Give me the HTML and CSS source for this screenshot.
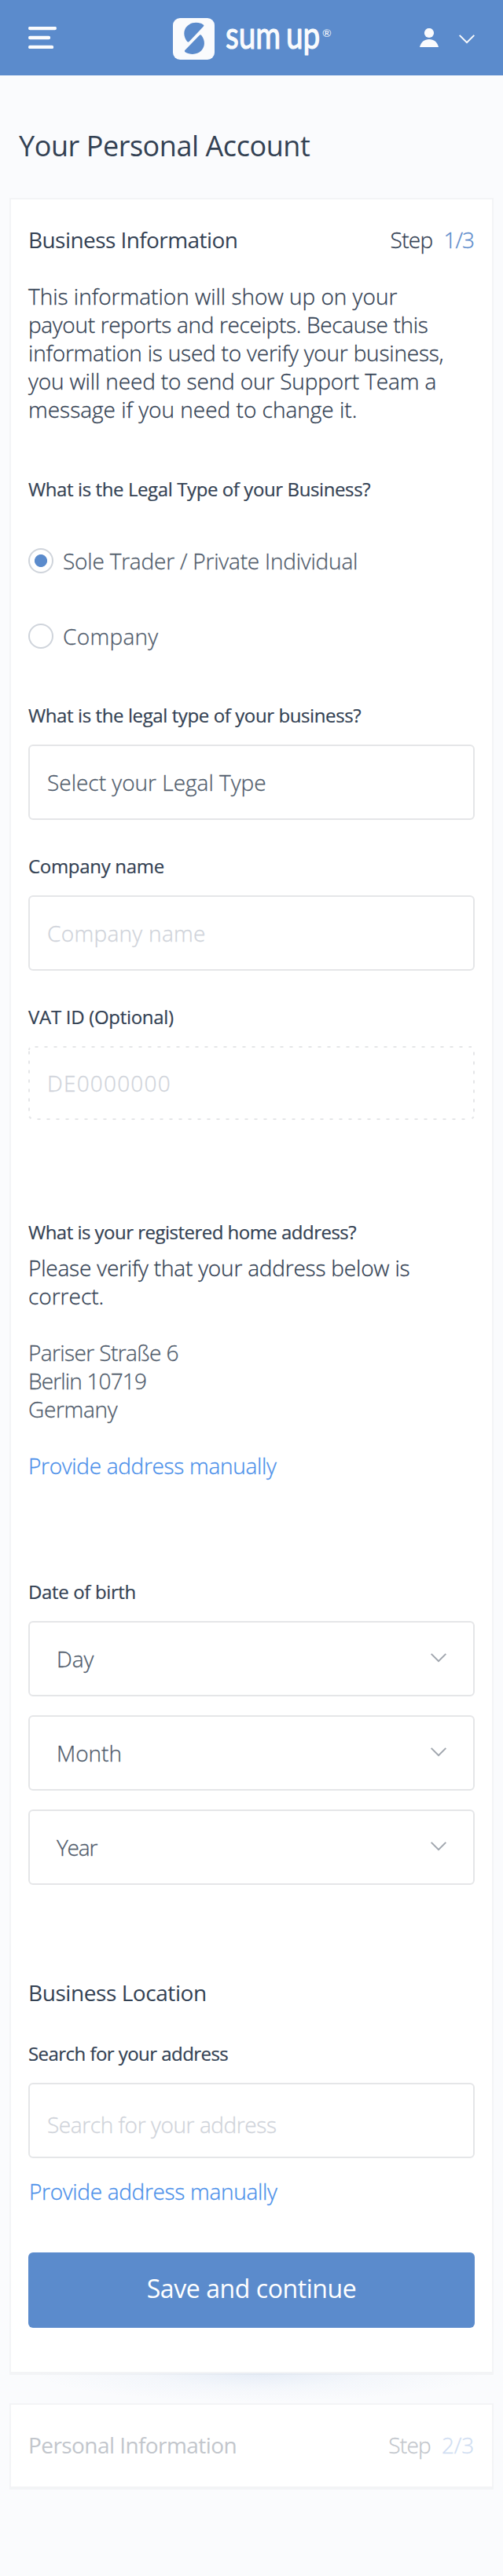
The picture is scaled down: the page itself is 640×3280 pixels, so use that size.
FILE: index.html
```html
<!DOCTYPE html>
<html lang="en">
<head>
<meta charset="utf-8">
<title>SumUp – Your Personal Account</title>
<link rel="stylesheet" href="styles.css">
</head>
<body>
<header class="topbar">
  <svg class="menu-icon" width="36" height="28" viewBox="0 0 36 28" fill="none" stroke="#fafbfd" stroke-width="4.4" stroke-linecap="round">
    <path d="M2.2 2H33.8M2.2 14H26M2.2 26H30"/>
  </svg>
  <svg class="logo" width="204" height="60" viewBox="0 0 204 60" fill="#fafbfd">
    <rect width="53" height="53" rx="9"/>
    <g fill="#5b8bcc">
      <path d="M38.7 8.4Q40 9.5 38.8 10.7L20.6 29.9Q19.2 31.2 18 29.8C14.3 24.500 13.300 19 15.300 14.500C18.500 6.500 29.500 2.800 38.700 8.400Z"/>
      <path d="M15.500 43.200Q14.300 42 15.500 40.800L33.700 21.900Q35.100 20.600 36.300 22C40.500 27.500 40.800 33.500 38.500 38C34.500 46 24 48.300 15.500 43.200Z"/>
    </g>
    <g class="wordmark">
      <text transform="translate(67 38.500) scale(.79 1)">sum</text>
      <text transform="translate(144 38.500) scale(.79 1)">up</text>
    </g>
    <text class="registered" x="190" y="24">®</text>
  </svg>
  <div class="account">
    <svg width="24" height="24" viewBox="0 0 24 24" fill="#fafbfd">
      <circle cx="12" cy="6" r="6.100"/>
      <path d="M0 24C1.500 17.500 6 14 12 14S22.500 17.500 24 24Z"/>
    </svg>
    <svg width="20" height="12" viewBox="0 0 20 12" fill="none" stroke="#fafbfd" stroke-width="2"><path d="M.7 .9L10 10.200L19.300 .9"/></svg>
  </div>
</header>

<main>
  <h1 class="page-title">Your Personal Account</h1>

  <section class="card card-active">
    <div class="card-head">
      <h2 class="heading">Business Information</h2>
      <div class="step"><span>Step</span><span class="count">1/3</span></div>
    </div>
    <p class="copy intro">
      <span>This information will show up on your</span>
      <span class="tight-3">payout reports and receipts. Because this</span>
      <span class="tight-2">information is used to verify your business,</span>
      <span class="tight-1">you will need to send our Support Team a</span>
      <span>message if you need to change it.</span>
    </p>

    <div class="label legal-label">What is the Legal Type of your Business?</div>
    <div class="radios">
      <div class="radio"><i class="dot dot-on"></i><span class="tight-2">Sole Trader / Private Individual</span></div>
      <div class="radio"><i class="dot"></i><span class="loose-3">Company</span></div>
    </div>

    <div class="label type-label">What is the legal type of your business?</div>
    <div class="field">Select your Legal Type</div>
    <div class="label label-wide">Company name</div>
    <div class="field placeholder loose-3">Company name</div>
    <div class="label label-wide">VAT ID (Optional)</div>
    <div class="field placeholder optional">
      <svg class="dashes" width="568" height="94" viewBox="0 0 568 94" fill="none" stroke="#e5e6e8" stroke-width="2" stroke-dasharray="4 8">
        <path d="M8.500 1H564"/><path d="M11.500 93H560"/><path d="M1 6.500V90"/><path d="M567 7.500V90"/>
        <path stroke-dasharray="none" d="M1 5Q1 3.200 2 2.200M1.200 89.800L3.500 92.300M566.800 90L564.500 92.300"/>
      </svg>
      <span class="digits">DE0000000</span>
    </div>

    <div class="label address-label">What is your registered home address?</div>
    <p class="copy verify">
      <span class="tight-2">Please verify that your address below is</span>
      <span>correct.</span>
    </p>
    <p class="copy address">
      <span class="tight-5">Pariser Straße 6</span>
      <span class="tight-8">Berlin 10719</span>
      <span class="tight-3">Germany</span>
    </p>
    <a class="link">Provide address manually</a>

    <div class="label birth-label">Date of birth</div>
    <div class="selects">
      <div class="field select"><span>Day</span><svg width="20" height="12" viewBox="0 0 20 12" class="chevron"><path d="M.7 .9L10 10.200L19.300 .9"/></svg></div>
      <div class="field select"><span>Month</span><svg width="20" height="12" viewBox="0 0 20 12" class="chevron"><path d="M.7 .9L10 10.200L19.300 .9"/></svg></div>
      <div class="field select"><span class="year">Year</span><svg width="20" height="12" viewBox="0 0 20 12" class="chevron"><path d="M.7 .9L10 10.200L19.300 .9"/></svg></div>
    </div>

    <h2 class="heading location-heading">Business Location</h2>
    <div class="label search-label">Search for your address</div>
    <div class="field placeholder search">Search for your address</div>
    <a class="link link-search">Provide address manually</a>
    <div class="button">Save and continue</div>
  </section>

  <section class="card card-next">
    <div class="card-head">
      <h2 class="heading">Personal Information</h2>
      <div class="step"><span>Step</span><span class="count">2/3</span></div>
    </div>
  </section>
</main>
</body>
</html>
```
FILE: styles.css
```css
* { box-sizing: border-box; }
html { background: #fafbfd; }
body {
  margin: 0;
  height: 3280px;
  color: #334153;
  font: 300 28px/36px "Open Sans", "Noto Sans", sans-serif;
  -webkit-text-stroke: .3px currentColor;
}
h1, h2, p { margin: 0; }
svg { display: block; flex: none; }

/* Top bar */
.topbar {
  display: grid;
  grid-template-columns: 184px 1fr auto;
  align-items: center;
  height: 96px;
  padding: 0 36px;
  background: #5b8bcc;
}
.logo { margin-top: 10px; overflow: visible; }
.wordmark {
  font: 400 49px "Lato", sans-serif;
  stroke: #fafbfd;
  stroke-width: 1.2;
  stroke-linejoin: round;
}
.registered { font: 400 14px "Lato", sans-serif; }
.account { display: flex; align-items: center; gap: 26px; }
.account svg:last-child { margin-top: 4px; }

.page-title {
  padding: 66px 24px 0;
  font-size: 36px;
  font-weight: 400;
  line-height: 48px;
  letter-spacing: -.45px;
  -webkit-text-stroke: 0;
}

/* Cards */
.card {
  position: relative;
  margin: 0 12px;
  padding: 33px 22px 0;
  border: 2px solid #f3f4f6;
  border-bottom-width: 4px;
  background: #fff;
}
.card-active { margin-top: 42px; padding-bottom: 56px; }
.card-active::after {
  content: "";
  position: absolute;
  left: 30px;
  right: 10px;
  top: calc(100% + 2px);
  height: 36px;
  background: radial-gradient(ellipse 50% 100% at 50% 0, rgba(91, 139, 204, .12), rgba(91, 139, 204, .04) 50%, rgba(91, 139, 204, 0));
}
.card-next { margin-top: 36px; padding-bottom: 35px; }
.card-next .heading, .card-next .step { color: #c2c6cc; }
.card-next .step .count { color: #cfddf2; }
.card-head { display: flex; justify-content: space-between; }
.heading { font-size: 28px; font-weight: 400; line-height: 36px; letter-spacing: -.57px; -webkit-text-stroke: 0; }
.step { display: flex; gap: 14px; padding-right: 1px; letter-spacing: -.7px; }
.count { color: #5b8bcc; letter-spacing: -1px; }
.card-next .count { letter-spacing: -.2px; }

.copy { white-space: nowrap; }
.copy span { display: block; }
.intro { margin-top: 36px; }

/* Form */
.label { font-size: 24px; font-weight: 400; line-height: 30px; letter-spacing: -.4px; -webkit-text-stroke: .2px currentColor; }
.label-wide { margin-top: 44px; letter-spacing: -.3px; }
.legal-label { margin-top: 69px; }
.type-label { margin-top: 70px; }
.radios { display: flex; flex-direction: column; gap: 64px; margin-top: 60px; color: #4f5b6b; }
.radio { display: flex; align-items: center; gap: 12px; height: 32px; line-height: 32px; }
.radio span { margin-bottom: 1px; }
.dot { width: 32px; height: 32px; border: 2px solid #cfd4db; border-radius: 50%; }
.dot-on { background: radial-gradient(circle, #5b8bcc 7.6px, transparent 8.4px); }

.field {
  display: flex;
  align-items: center;
  height: 96px;
  margin-top: 22px;
  padding: 0 22px 1px;
  border: 2px solid #e5e6e8;
  border-radius: 6px;
  color: #4f5b6b;
}
.placeholder { color: #cfd3da; }
.optional { position: relative; height: 94px; padding-bottom: 0; border-color: transparent; }
.dashes { position: absolute; left: -2px; top: -2px; }
.digits { letter-spacing: 1.2px; }

.address-label { margin-top: 128px; letter-spacing: -.52px; }
.verify { margin-top: 12px; }
.address { margin-top: 36px; color: #4f5b6b; }
.link { display: block; margin-top: 36px; color: #4a8fea; letter-spacing: -.31px; }
.birth-label { margin-top: 128px; letter-spacing: -.36px; }
.selects { display: flex; flex-direction: column; gap: 24px; margin-top: 22px; }
.select { justify-content: space-between; margin: 0; padding: 0 34px 1px 34px; }
.chevron { margin-bottom: 1px; fill: none; stroke: #a0a6ae; stroke-width: 2; }
.year { letter-spacing: -1.2px; }
.location-heading { margin-top: 119px; letter-spacing: -.43px; }
.search-label { margin-top: 45px; letter-spacing: -.55px; }
.search { padding-top: 10px; padding-bottom: 0; letter-spacing: -.41px; }
.link-search { margin-top: 24px; padding-left: 1px; }
.button {
  display: flex;
  align-items: center;
  justify-content: center;
  height: 96px;
  margin-top: 60px;
  padding-bottom: 4px;
  border-radius: 6px;
  background: #5b8bcc;
  color: #fff;
  font-size: 32px;
  font-weight: 400;
  letter-spacing: -.43px;
  -webkit-text-stroke: 0;
}

/* Tracking */
.tight-1 { letter-spacing: -.14px; }
.tight-2 { letter-spacing: -.2px; }
.tight-3 { letter-spacing: -.33px; }
.tight-5 { letter-spacing: -.6px; }
.tight-8 { letter-spacing: -.84px; }
.loose-3 { letter-spacing: .3px; }
```
